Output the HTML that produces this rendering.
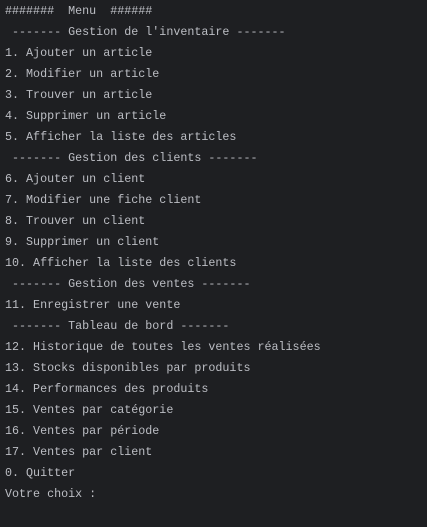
<!DOCTYPE html>
<html><head><meta charset="utf-8"><style>
html,body{margin:0;padding:0;background:#1e1f22;width:427px;height:527px;overflow:hidden}
pre{margin:0;padding:0 0 0 5px;font-family:"Liberation Mono",monospace;font-size:11.7px;line-height:21px;color:#bcbec4;position:absolute;top:1px;left:0}
</style></head><body><pre>#######  Menu  ######
 ------- Gestion de l'inventaire -------
1. Ajouter un article
2. Modifier un article
3. Trouver un article
4. Supprimer un article
5. Afficher la liste des articles
 ------- Gestion des clients -------
6. Ajouter un client
7. Modifier une fiche client
8. Trouver un client
9. Supprimer un client
10. Afficher la liste des clients
 ------- Gestion des ventes -------
11. Enregistrer une vente
 ------- Tableau de bord -------
12. Historique de toutes les ventes réalisées
13. Stocks disponibles par produits
14. Performances des produits
15. Ventes par catégorie
16. Ventes par période
17. Ventes par client
0. Quitter
Votre choix :</pre></body></html>
